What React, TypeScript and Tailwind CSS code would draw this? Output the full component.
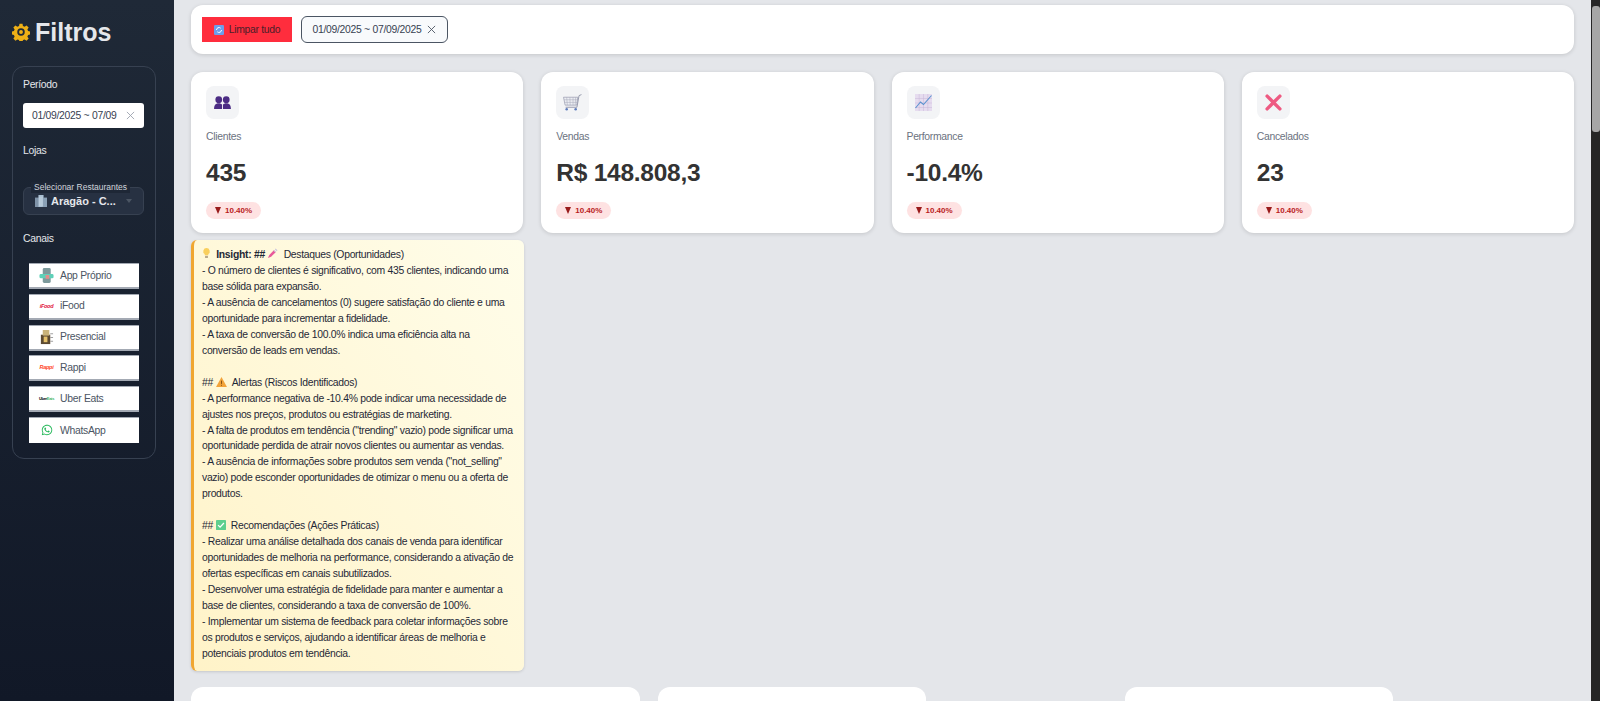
import type { ReactNode } from "react";
import { FaWhatsapp } from "react-icons/fa";

const GearIcon = () => (
  <svg viewBox="0 0 24 24" className="w-[18px] h-[18px]">
    <path
      fill="#eeb016"
      d="M10 1h4l.6 3 2.2.9 2.6-1.7 2.8 2.8-1.7 2.6.9 2.2 3 .6v4l-3 .6-.9 2.2 1.7 2.6-2.8 2.8-2.6-1.7-2.2.9-.6 3h-4l-.6-3-2.2-.9-2.6 1.7-2.8-2.8 1.7-2.6-.9-2.2-3-.6v-4l3-.6.9-2.2-1.7-2.6 2.8-2.8 2.6 1.7 2.2-.9z"
    />
    <circle cx="12" cy="12" r="5" fill="#1f2937" />
    <circle cx="12" cy="12" r="2.6" fill="#eeb016" />
  </svg>
);

const RefreshIcon = () => (
  <svg viewBox="0 0 12 12" className="w-[10px] h-[10px]">
    <rect width="12" height="12" rx="1.5" fill="#6d9eeb" />
    <path d="M3 6a3 3 0 0 1 5-2.2M9 6a3 3 0 0 1-5 2.2" fill="none" stroke="#fff" strokeWidth="1.2" />
  </svg>
);

const BuildingIcon = () => (
  <svg viewBox="0 0 14 14" className="w-3 h-3 shrink-0">
    <rect x="0" y="3" width="5" height="11" fill="#7f93a8" />
    <rect x="4" y="0" width="6" height="14" fill="#a9bfd2" />
    <rect x="9" y="3" width="5" height="11" fill="#8aa0b5" />
    <path d="M5.5 2v11M7 2v11M8.5 2v11" stroke="#dbe6ef" strokeWidth=".5" />
  </svg>
);

const PeopleIcon = () => (
  <svg viewBox="0 0 18 16" className="w-[17px] h-[15px]">
    <circle cx="5" cy="5" r="3.6" fill="#4c2c84" />
    <circle cx="13" cy="5" r="3.6" fill="#4c2c84" />
    <path d="M0 15c0-4 1.6-6.2 5-6.2 1.6 0 2.8.6 3.5 1.6V15zM18 15c0-4-1.6-6.2-5-6.2-1.6 0-2.8.6-3.5 1.6V15z" fill="#4c2c84" />
  </svg>
);

const CartIcon = () => (
  <svg viewBox="0 0 18 16" className="w-[19px] h-[17px]" fill="none">
    <path d="M0.5 3h13.5l-1 7.5H2z" fill="#eceef3" stroke="#9a9db0" strokeWidth=".7" />
    <path d="M3.5 3l.6 7.5M6.5 3l.3 7.5M9.5 3v7.5M12 3l-.4 7.5M1 5.4h12.6M1.5 7.9h11.8" stroke="#a7aabb" strokeWidth=".5" />
    <path d="M17.5 0.5L15.2 1.5 13.2 12.5H2.5" stroke="#8a8da3" strokeWidth=".8" />
    <circle cx="3.5" cy="14.3" r="1.2" fill="#5f7dbd" />
    <circle cx="12" cy="14.3" r="1.2" fill="#5f7dbd" />
  </svg>
);

const ChartIcon = () => (
  <svg viewBox="0 0 17 17" className="w-[17px] h-[17px]">
    <rect width="17" height="17" fill="#e6dcef" />
    <path d="M0 4.5h17M0 9h17M0 13.5h17M4.2 0v17M8.5 0v17M12.8 0v17" stroke="#c9b8d8" strokeWidth=".5" />
    <path d="M0.5 14l5-6 3 2.5L16.5 1.5" fill="none" stroke="#5b93cf" strokeWidth="1.1" />
  </svg>
);

const CrossIcon = () => (
  <svg viewBox="0 0 16 16" className="w-[17px] h-[17px]">
    <path d="M2 2l12 12M14 2L2 14" stroke="#ee5a82" strokeWidth="3.2" strokeLinecap="round" />
  </svg>
);

const BulbIcon = () => (
  <svg viewBox="0 0 10 12" className="w-[9px] h-[11px] inline-block align-[-1px]">
    <path d="M5 0a3.6 3.6 0 0 0-2 6.6V8h4V6.6A3.6 3.6 0 0 0 5 0z" fill="#f9cf5d" />
    <rect x="3.4" y="8.6" width="3.2" height="2.4" fill="#b9a98a" />
  </svg>
);

const SyringeIcon = () => (
  <svg viewBox="0 0 12 12" className="w-[11px] h-[11px] inline-block align-[-1px]">
    <path d="M1 11l1.5-3.5 5-5 2 2-5 5z" fill="#e85a9a" />
    <path d="M7.5 2.5L9.5 4.5M9 1l2 2" stroke="#c9c5dc" strokeWidth="1.2" />
  </svg>
);

const WarnIcon = () => (
  <svg viewBox="0 0 12 11" className="w-[11px] h-[10px] inline-block align-[-1px]">
    <path d="M6 0l6 11H0z" fill="#f2a33a" />
    <path d="M6 4v3.6M6 8.6v1" stroke="#7a4a10" strokeWidth="1" />
  </svg>
);

const CheckIcon = () => (
  <svg viewBox="0 0 12 12" className="w-[10px] h-[10px] inline-block align-[-1px]">
    <rect width="12" height="12" rx="1" fill="#5ecf8e" />
    <path d="M2.5 6.2l2.4 2.4 4.6-5" fill="none" stroke="#fff" strokeWidth="1.5" />
  </svg>
);

const CloseMark = ({ color }: { color: string }) => (
  <svg viewBox="0 0 10 10" className="w-[9px] h-[9px] shrink-0" fill="none" stroke={color} strokeWidth="1">
    <path d="M1 1l8 8M9 1L1 9" />
  </svg>
);

const AppIcon = () => (
  <svg viewBox="0 0 16 16" className="w-[15px] h-[15px]">
    <rect x="4" y="0" width="8.5" height="16" rx="1.5" fill="#7d9a9c" />
    <rect x="0.5" y="6.5" width="15" height="4.5" rx="1.5" fill="#5fd0b8" />
    <rect x="7" y="7.5" width="4" height="4" fill="#e58b8b" />
  </svg>
);

const StoreIcon = () => (
  <svg viewBox="0 0 16 16" className="w-[15px] h-[15px]">
    <rect x="2" y="5" width="10" height="10" fill="#5b4a32" />
    <rect x="4" y="0" width="7" height="6" fill="#c9b37a" />
    <rect x="5" y="7" width="4" height="6" fill="#e4c06a" />
    <path d="M12 4h3M12 8h3M12 12h3" stroke="#9a9a9a" strokeWidth="1" />
  </svg>
);

const channels: { name: string; icon: ReactNode }[] = [
  { name: "App Próprio", icon: <AppIcon /> },
  { name: "iFood", icon: <span className="text-[5.5px] font-bold italic text-[#e1173f] leading-none">iFood</span> },
  { name: "Presencial", icon: <StoreIcon /> },
  { name: "Rappi", icon: <span className="text-[5.5px] font-bold italic text-[#ff441f] leading-none">Rappi</span> },
  {
    name: "Uber Eats",
    icon: (
      <span className="text-[4px] font-bold text-black leading-none">
        Uber<span className="text-[#3fb56b]">Eats</span>
      </span>
    ),
  },
  { name: "WhatsApp", icon: <FaWhatsapp className="w-[12px] h-[12px] text-[#25b85a]" /> },
];

const stats: { label: string; value: string; icon: ReactNode }[] = [
  { label: "Clientes", value: "435", icon: <PeopleIcon /> },
  { label: "Vendas", value: "R$ 148.808,3", icon: <CartIcon /> },
  { label: "Performance", value: "-10.4%", icon: <ChartIcon /> },
  { label: "Cancelados", value: "23", icon: <CrossIcon /> },
];

const StatCard = ({ label, value, icon }: { label: string; value: string; icon: ReactNode }) => (
  <div className="bg-white rounded-xl shadow-[0_1px_4px_rgba(0,0,0,0.14)] h-[161px] px-[15px] pt-[14px]">
    <div className="w-[33px] h-[33px] rounded-lg bg-[#f3f4f6] flex items-center justify-center">{icon}</div>
    <div className="mt-[11px] text-[10.4px] tracking-[-0.3px] leading-[14px] text-[#6b7280]">{label}</div>
    <div className="mt-[14px] text-[24.5px] tracking-[-0.25px] leading-[30px] font-bold text-[#333]">{value}</div>
    <div className="mt-[14px] inline-flex items-center gap-[4px] h-[17px] px-[9px] rounded-full bg-[#fee2e2] text-[8px] font-bold text-[#b91c1c]">
      <span className="w-0 h-0 border-x-[3.5px] border-x-transparent border-t-[7px] border-t-[#991b1b]" />
      10.40%
    </div>
  </div>
);

const Sidebar = () => (
  <aside className="w-[174px] shrink-0 h-full bg-gradient-to-b from-[#1f2937] to-[#111827] px-3 pt-[17px]">
    <div className="flex items-center gap-[5px] h-[30px]">
      <GearIcon />
      <span className="text-[25px] font-bold text-[#e5e7eb] leading-none">Filtros</span>
    </div>
    <div className="mt-[19px] h-[393px] w-[144px] rounded-xl border border-[#374151] px-[10px] pt-[11px] text-[10.4px] tracking-[-0.3px]">
      <div className="leading-[14px] text-[#e5e7eb]">Período</div>
      <div className="mt-[11px] h-[25px] w-[121px] rounded-[3px] bg-white flex items-center justify-between pl-[9px] pr-[9px] text-[#374151]">
        <span>01/09/2025 ~ 07/09</span>
        <CloseMark color="#9ca3af" />
      </div>
      <div className="mt-[16px] leading-[14px] text-[#e5e7eb]">Lojas</div>
      <div className="relative mt-[29px] h-[28px] w-[121px] rounded-md border border-[#374151] bg-[#273142] flex items-center pl-[11px] pr-[11px] gap-[4px]">
        <span className="absolute -top-[6px] left-[7px] px-[3px] bg-[#1e2736] text-[8.5px] tracking-normal leading-[11px] text-[#d1d5db] whitespace-nowrap">
          Selecionar Restaurantes
        </span>
        <BuildingIcon />
        <span className="text-[11px] tracking-normal font-bold text-[#e5e7eb] whitespace-nowrap">Aragão - C...</span>
        <span className="ml-auto w-0 h-0 border-x-[3px] border-x-transparent border-t-[4px] border-t-[#4b5563]" />
      </div>
      <div className="mt-[17px] leading-[14px] text-[#e5e7eb]">Canais</div>
      <div className="mt-[17px] pl-[6px] flex flex-col gap-[4.8px]">
        {channels.map((channel) => (
          <div
            key={channel.name}
            className="h-[26px] w-[110px] bg-white border-t border-b-2 border-[#a3a9b3] last:border-b-0 flex items-center text-[#4b5563]"
          >
            <span className="w-[31px] pl-[7px] pr-[3px] flex items-center justify-center shrink-0">{channel.icon}</span>
            <span>{channel.name}</span>
          </div>
        ))}
      </div>
    </div>
  </aside>
);

const InsightCard = () => (
  <div className="mt-[7px] w-[333px] h-[431px] rounded-md border-l-[3px] border-[#f0a630] bg-gradient-to-tr from-[#fff3c8] to-[#fffdea] shadow-[0_1px_3px_rgba(0,0,0,0.14)] pl-[8px] pr-[9px] pt-[7px] text-[10.4px] tracking-[-0.3px] leading-[15.95px] text-[#1f2937]">
    <p>
      <BulbIcon /> &nbsp;<b>Insight:</b> <b>##</b> <SyringeIcon /> &nbsp;Destaques (Oportunidades)
    </p>
    <p>- O número de clientes é significativo, com 435 clientes, indicando uma base sólida para expansão.</p>
    <p>- A ausência de cancelamentos (0) sugere satisfação do cliente e uma oportunidade para incrementar a fidelidade.</p>
    <p>- A taxa de conversão de 100.0% indica uma eficiência alta na conversão de leads em vendas.</p>
    <p className="mt-[16px]">
      ## <WarnIcon /> &nbsp;Alertas (Riscos Identificados)
    </p>
    <p>- A performance negativa de -10.4% pode indicar uma necessidade de ajustes nos preços, produtos ou estratégias de marketing.</p>
    <p>- A falta de produtos em tendência ("trending" vazio) pode significar uma oportunidade perdida de atrair novos clientes ou aumentar as vendas.</p>
    <p>- A ausência de informações sobre produtos sem venda ("not_selling" vazio) pode esconder oportunidades de otimizar o menu ou a oferta de produtos.</p>
    <p className="mt-[16px]">
      ## <CheckIcon /> &nbsp;Recomendações (Ações Práticas)
    </p>
    <p>- Realizar uma análise detalhada dos canais de venda para identificar oportunidades de melhoria na performance, considerando a ativação de ofertas específicas em canais subutilizados.</p>
    <p>- Desenvolver uma estratégia de fidelidade para manter e aumentar a base de clientes, considerando a taxa de conversão de 100%.</p>
    <p>- Implementar um sistema de feedback para coletar informações sobre os produtos e serviços, ajudando a identificar áreas de melhoria e potenciais produtos em tendência.</p>
  </div>
);

export default function App() {
  return (
    <div className="w-[1600px] h-[701px] flex overflow-hidden bg-[#e4e6ea] font-['Liberation_Sans',Arial,sans-serif]">
      <Sidebar />
      <main className="flex-1 h-full overflow-hidden px-[17px] pt-[5px]">
        <div className="h-[49px] rounded-xl bg-white shadow-[0_1px_4px_rgba(0,0,0,0.14)] flex items-center gap-[9px] pl-[11px] text-[10.4px] tracking-[-0.3px]">
          <div className="h-[25px] w-[90px] bg-[#ff2d3d] flex items-center justify-center gap-[5px] text-[#4b1f2a]">
            <RefreshIcon />
            Limpar tudo
          </div>
          <div className="h-[27px] w-[147px] rounded-md border border-[#4b5563] bg-[#f8fafc] flex items-center justify-center gap-[6px] text-[#374151]">
            01/09/2025 ~ 07/09/2025
            <CloseMark color="#4b5563" />
          </div>
        </div>
        <div className="mt-[18px] grid grid-cols-4 gap-[18px]">
          {stats.map((stat) => (
            <StatCard key={stat.label} {...stat} />
          ))}
        </div>
        <InsightCard />
        <div className="mt-[16px] grid grid-cols-[449px_268px_163px_268px] gap-[18px]">
          <div className="h-[100px] bg-white rounded-xl" />
          <div className="h-[100px] bg-white rounded-xl" />
          <div />
          <div className="h-[100px] bg-white rounded-xl" />
        </div>
      </main>
      <div className="w-[9px] shrink-0 h-full bg-[#262626] pt-[6px] pl-[1px]">
        <div className="h-[126px] w-[8px] rounded-[3px] bg-[#a6a6a6]" />
      </div>
    </div>
  );
}
